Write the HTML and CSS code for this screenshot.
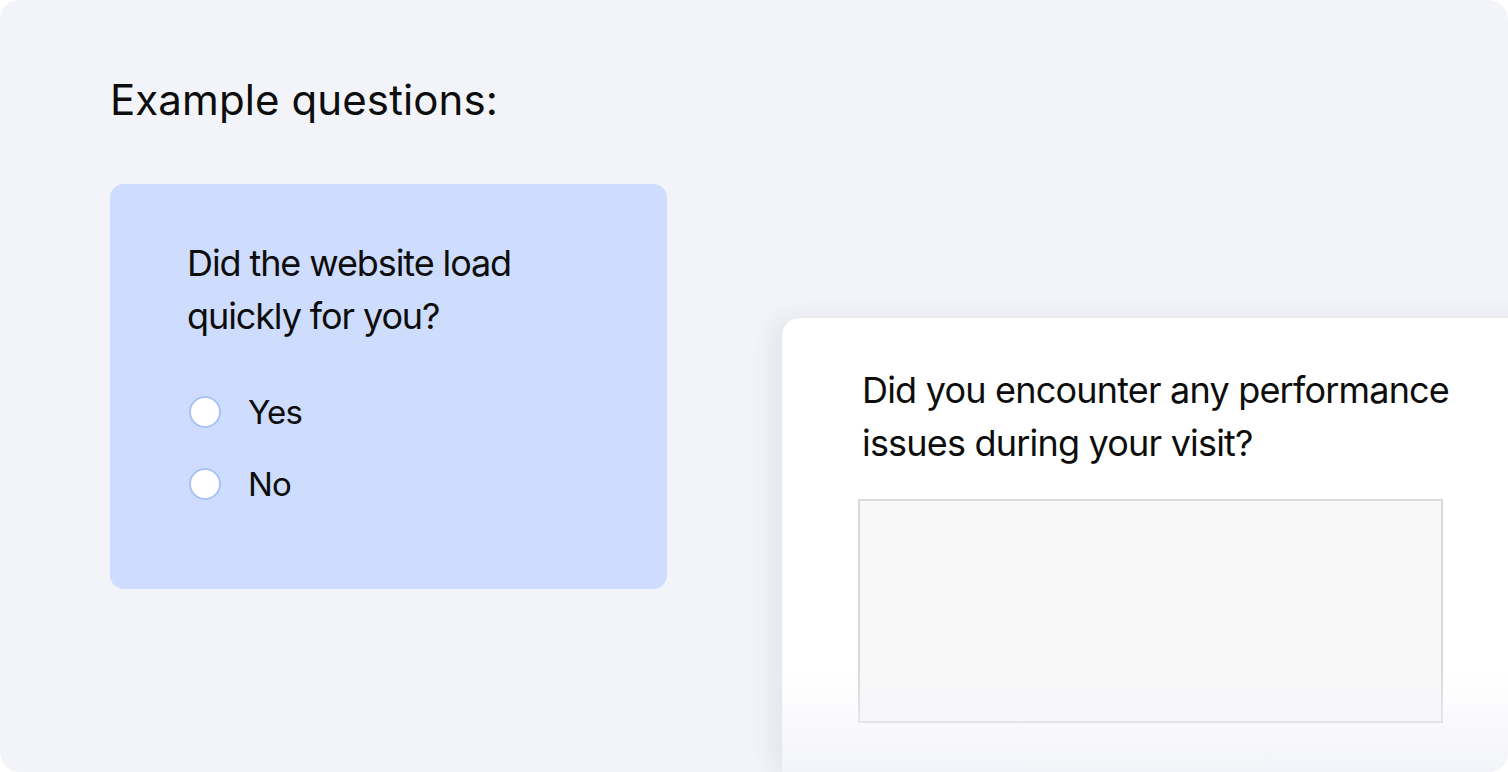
FILE: index.html
```html
<!DOCTYPE html>
<html lang="en">
<head>
    <meta charset="UTF-8">
    <meta name="viewport" content="width=device-width, initial-scale=1.0">
    <title>Example questions</title>
    <link rel="stylesheet" href="styles.css">
</head>
<body>
    <div class="panel">
        <h2 class="heading">Example questions:</h2>
        <div class="cards">
            <div class="card card-blue">
                <p class="question">Did the website load<br>quickly for you?</p>
                <label class="option"><span class="radio"></span>Yes</label>
                <label class="option"><span class="radio"></span>No</label>
            </div>
            <div class="card card-white">
                <p class="question question-wide">Did you encounter any performance<br>issues during your visit?</p>
                <div class="answer-box"></div>
            </div>
        </div>
    </div>
</body>
</html>
```

FILE: styles.css
```css
body {
    margin: 0;
    padding: 0;
    background: #fff;
    font-family: Inter, "Open Sans", sans-serif;
    color: #0d0d0d;
}
.panel {
    width: 1508px;
    height: 772px;
    box-sizing: border-box;
    padding: 75px 0 0 110px;
    background: #f3f4f9;
    border-radius: 20px;
    overflow: hidden;
}
.heading {
    margin: 0;
    font-size: 42px;
    line-height: 50px;
    font-weight: 400;
    letter-spacing: 0.1px;
}
.cards {
    display: flex;
    align-items: flex-start;
    gap: 115px;
    margin-top: 59px;
}
.card {
    flex-shrink: 0;
}
.card-blue {
    width: 557px;
    height: 405px;
    box-sizing: border-box;
    padding: 53px 0 0 77px;
    background: #cedcfd;
    border-radius: 14px;
}
.question {
    margin: 0;
    font-size: 36px;
    line-height: 53px;
    letter-spacing: -1.1px;
}
.option {
    display: flex;
    align-items: center;
    height: 72px;
    font-size: 33px;
    letter-spacing: -0.8px;
}
.card-blue .question {
    margin-bottom: 33px;
}
.radio {
    width: 28px;
    height: 28px;
    border-radius: 50%;
    border: 2px solid #abc2f6;
    background: #fff;
    margin: 0 27px 0 2px;
}
.card-white {
    position: relative;
    width: 780px;
    height: 454px;
    box-sizing: border-box;
    margin-top: 134px;
    padding: 46px 0 0 76px;
    background: #fff;
    border-radius: 18px 0 0 0;
    box-shadow: -10px 0 24px rgba(30, 40, 80, 0.07);
}
.card-white::after {
    content: "";
    position: absolute;
    left: 0;
    right: 0;
    bottom: 0;
    height: 100px;
    background: linear-gradient(to bottom, rgba(243, 244, 249, 0), #f3f4f9);
}
.question-wide {
    padding-left: 4px;
    letter-spacing: -0.8px;
}
.answer-box {
    width: 585px;
    height: 224px;
    box-sizing: border-box;
    margin-top: 29px;
    border: 2px solid #d9d9dc;
    background: #f8f8f9;
}
```
